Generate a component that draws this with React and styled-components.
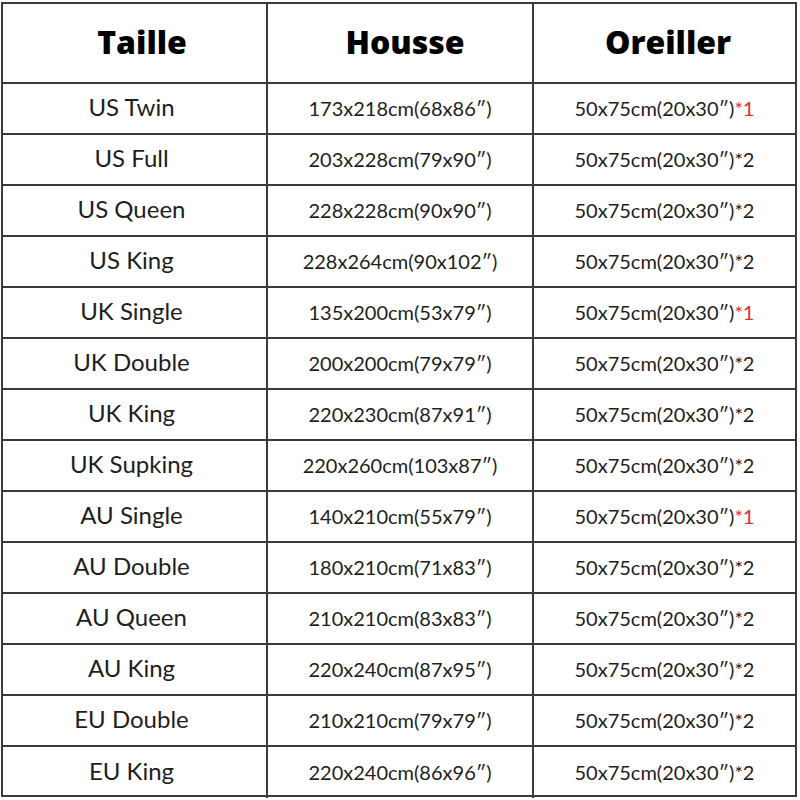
import React from "react";
import styled, { createGlobalStyle } from "styled-components";

const Global = createGlobalStyle`
  html, body { margin: 0; padding: 0; background: #fff; }
  #root { width: 800px; height: 800px; }
`;

const Page = styled.div`
  width: 800px;
  height: 800px;
  padding: 2px 3px 3px 1px;
  box-sizing: border-box;
  background: #fff;
`;

const Table = styled.div`
  display: grid;
  grid-template-columns: 265px 266px 1fr;
  grid-template-rows: 80px repeat(14, 51px);
  border: 2px solid #3a3a3a;
  box-sizing: border-box;
  height: 795px;
`;

const Cell = styled.div`
  display: flex;
  align-items: center;
  justify-content: center;
  border-right: ${(p) => (p.$last ? "none" : "2px solid #3a3a3a")};
  border-bottom: ${(p) => (p.$bottom ? "none" : "2px solid #3a3a3a")};
  font-family: "Lato", "Open Sans", sans-serif;
  font-size: 22px;
  color: #1e1e1e;
  white-space: nowrap;
  padding-bottom: 1px;
`;

const HeadCell = styled(Cell)`
  font-family: "Open Sans", "DejaVu Sans", sans-serif;
  font-weight: 800;
  font-size: 32px;
  color: #000;
  padding-top: 0;
  padding-bottom: 3px;
  padding-left: ${(p) => p.$shift || 0}px;
`;

const SizeCell = styled(Cell)`
  font-size: 24px;
  padding-bottom: 4px;
  padding-right: 6px;
`;

const DimCell = styled(Cell)`
  font-size: 20px;
  padding-bottom: 2px;
`;

const Red = styled.span`
  color: #e0303a;
`;

const rows = [
  ["US Twin", "173x218cm(68x86″)", 1],
  ["US Full", "203x228cm(79x90″)", 2],
  ["US Queen", "228x228cm(90x90″)", 2],
  ["US King", "228x264cm(90x102″)", 2],
  ["UK Single", "135x200cm(53x79″)", 1],
  ["UK Double", "200x200cm(79x79″)", 2],
  ["UK King", "220x230cm(87x91″)", 2],
  ["UK Supking", "220x260cm(103x87″)", 2],
  ["AU Single", "140x210cm(55x79″)", 1],
  ["AU Double", "180x210cm(71x83″)", 2],
  ["AU Queen", "210x210cm(83x83″)", 2],
  ["AU King", "220x240cm(87x95″)", 2],
  ["EU Double", "210x210cm(79x79″)", 2],
  ["EU King", "220x240cm(86x96″)", 2],
];

export default function App() {
  return (
    <Page>
      <Global />
      <Table>
        <HeadCell $shift={15}>Taille</HeadCell>
        <HeadCell $shift={10}>Housse</HeadCell>
        <HeadCell $last $shift={7}>Oreiller</HeadCell>
        {rows.map(([size, dim, n], i) => {
          const bottom = i === rows.length - 1;
          return (
            <React.Fragment key={size}>
              <SizeCell $bottom={bottom}>{size}</SizeCell>
              <DimCell $bottom={bottom}>{dim}</DimCell>
              <DimCell $bottom={bottom} $last>
                50x75cm(20x30″)
                {n === 1 ? <Red>*1</Red> : "*2"}
              </DimCell>
            </React.Fragment>
          );
        })}
      </Table>
    </Page>
  );
}
